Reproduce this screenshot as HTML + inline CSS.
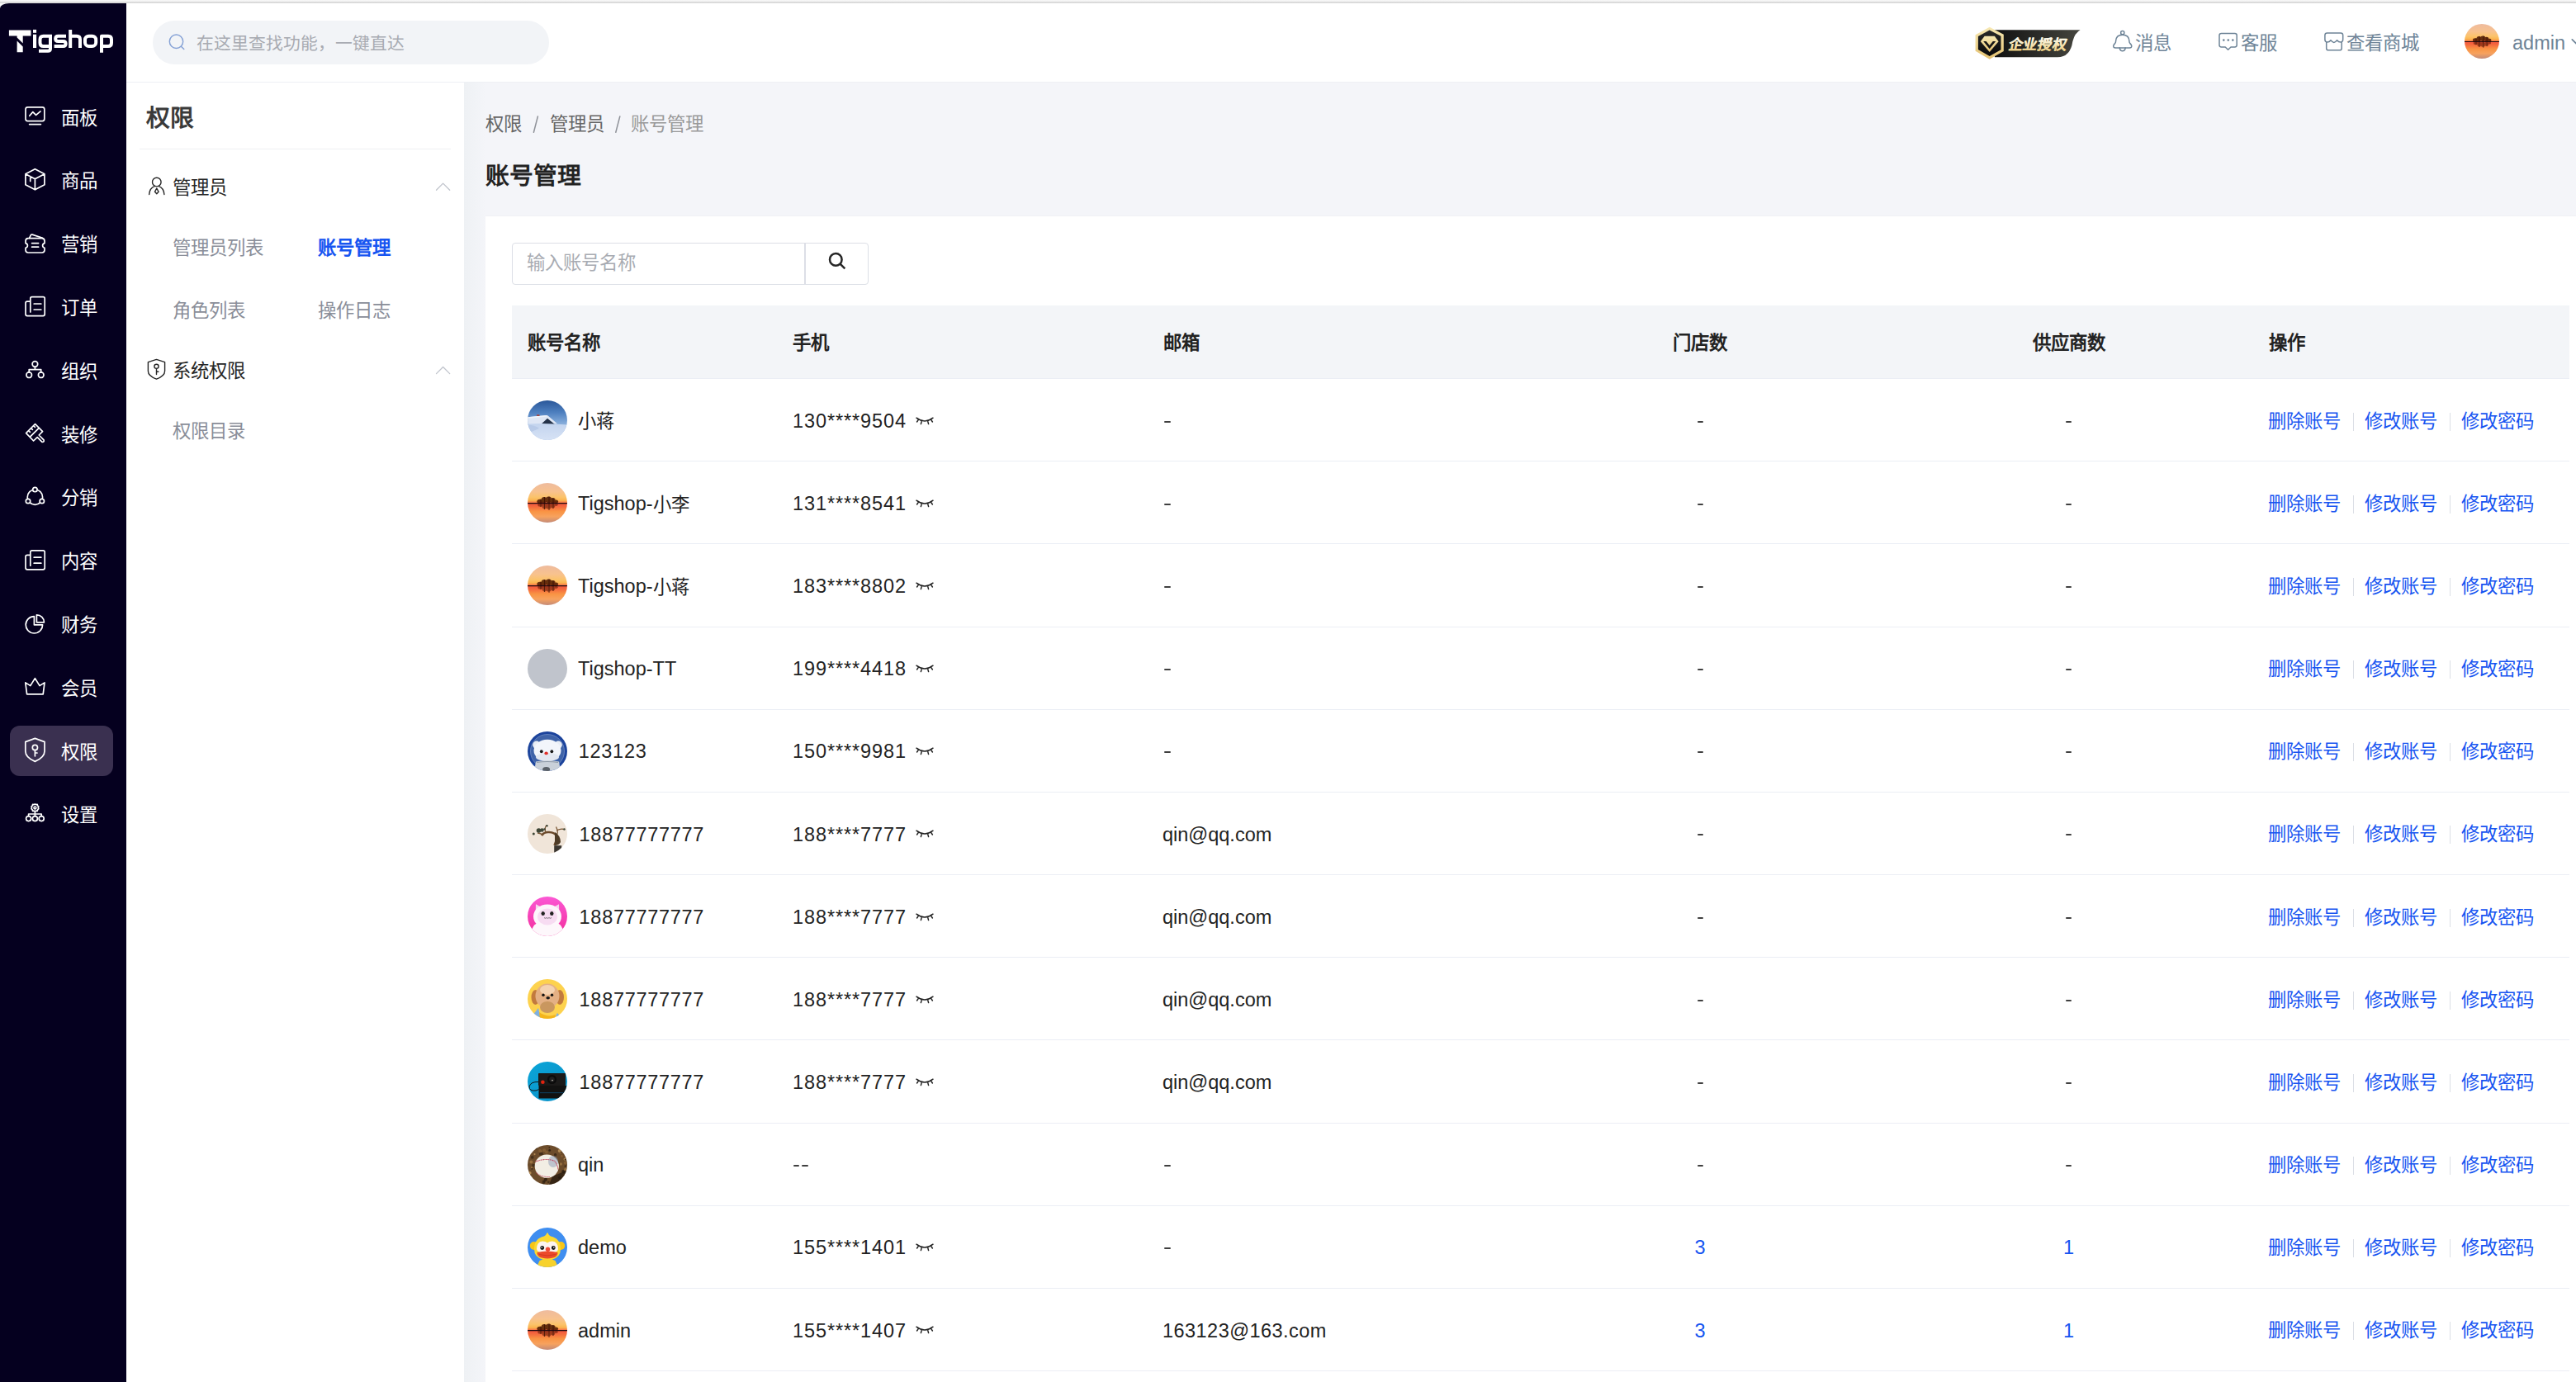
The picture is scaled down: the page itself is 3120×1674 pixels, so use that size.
<!DOCTYPE html>
<html lang="zh-CN">
<head>
<meta charset="utf-8">
<style>
*{box-sizing:border-box;margin:0;padding:0}
html,body{width:3120px;height:1674px;overflow:hidden;background:#fff}
body{position:relative;font-family:"Liberation Sans",sans-serif;font-size:22.4px;line-height:30px;color:#222}
.abs{position:absolute}
.t{position:absolute;white-space:nowrap;line-height:30px;font-size:22.4px}
#winbar{left:0;top:0;width:3120px;height:4px;background:linear-gradient(#f6f6f6 0,#f4f4f4 1.8px,#d8d8d8 2.2px,#dcdcdc 3.6px,#e8e8e8 4px)}
#corner{left:0;top:3.6px;width:16px;height:10px;background:#f6f6f6}
#side{left:0;top:4px;width:153px;height:1670px;background:#05001f;border-top-left-radius:11px 6px}
#header{left:153px;top:4px;width:2967px;height:96px;background:#fff;border-bottom:1px solid #eef0f4}
#panel{left:153px;top:100px;width:409px;height:1574px;background:#fff}
#content{left:562px;top:100px;width:2558px;height:1574px;background:#f4f5f9}
#shade{left:562px;top:100px;width:26px;height:1574px;background:linear-gradient(90deg,#eef1f4,rgba(244,245,249,0))}
#card{left:588px;top:262px;width:2600px;height:1430px;background:#fff;box-shadow:0 -1px 1px rgba(0,0,0,0.015)}
#active{left:12px;top:879px;width:125px;height:61px;border-radius:12px;background:#3a3050}
.mtxt{color:#fff}
#hsearch{left:185px;top:25px;width:480px;height:53px;border-radius:27px;background:#f2f4f7}
.hph{color:#a8abb2}
.hnav{color:#6e8497}
.ptitle{font-size:28.8px;line-height:40px;font-weight:bold;color:#3a3a3a}
.grp{color:#262626}
.sub{color:#8a8e99}
.sub.on{color:#1755f1;font-weight:600}
.bc{color:#666}
.bc2{color:#999}
.sep{color:#b6b9c0}
.title{font-size:28.8px;line-height:40px;font-weight:bold;color:#222}
#sinput{left:619.6px;top:294.1px;width:432px;height:50.5px;border:1.5px solid #dcdfe6;border-radius:4px;background:#fff}
#sdiv{left:974.4px;top:295px;width:1.5px;height:49px;background:#dcdfe6}
#thead{left:620px;top:370px;width:2492px;height:89px;background:#f3f5f8;border-bottom:1px solid #ebeef5}
.th{font-weight:600;color:#222}
.rowline{left:620px;width:2492px;height:1px;background:#ebeef5}
.cell{color:#222}
.ctr{transform:translateX(-50%)}
.link{color:#1755f1}
.acts{color:#1755f1;display:flex;align-items:center}
.lat{font-size:23.5px;position:relative;top:-0.8px}
.badge{font-size:18.6px;line-height:24px;font-weight:900;font-style:normal;transform:skewX(-11deg);transform-origin:0 100%;background:linear-gradient(#fffdf6,#f3dfa6 55%,#e8c67a);-webkit-background-clip:text;background-clip:text;color:transparent}
.vsep{width:1.5px;height:22px;background:#dcdfe6}
.dash{width:7.4px;height:2px;background:#404040;border-radius:1px}
</style>
</head>
<body>
<div id="winbar" class="abs"></div>
<div id="corner" class="abs"></div>
<div id="side" class="abs"></div>
<div id="active" class="abs"></div>
<svg class="abs" style="left:0;top:0" width="153" height="90" viewBox="0 0 153 90"><g fill="#fff"><path d="M10.9 36.6 H37.5 V43.6 H27.7 V52.6 L20.6 45.6 V43.6 H10.9 Z"/><path d="M20.6 49.6 L27.7 56.4 V63.3 H20.6 Z"/><rect x="40" y="35.9" width="4.1" height="3.9"/><rect x="40" y="41.7" width="4.1" height="16.3"/></g><g fill="none" stroke="#fff" stroke-width="4" stroke-linejoin="round"><path d="M61 43.7 H52.5 Q48.5 43.7 48.5 47.7 V52 Q48.5 56 52.5 56 H61 M61 41.7 V59 Q61 61.7 58 61.7 H47"/><path d="M80 43.7 H70.5 Q67.2 43.7 67.2 46.9 Q67.2 49.9 70.5 49.9 H76.5 Q79.6 49.9 79.6 53 Q79.6 56 76.5 56 H65.6"/><path d="M85.2 35.9 V58 M85.2 43.7 H93 Q97 43.7 97 47.7 V58"/><rect x="103" y="43.7" width="13.2" height="12.3" rx="4.5"/><path d="M123 63.7 V43.7 H131 Q135 43.7 135 47.7 V52 Q135 56 131 56 H123"/></g></svg>
<svg class="abs" style="left:0;top:0" width="153" height="1674" viewBox="0 0 153 1674"><g fill="none" stroke="#fff" stroke-width="1.7" stroke-linecap="round" stroke-linejoin="round"><rect x="31" y="129.8" width="22.8" height="16.8" rx="2.5"/><path d="M35.6 150.6 H49.4"/><path d="M35.8 140.3 L39.8 135.6 L43.6 139.4 L49 134.8"/><path d="M42.4 204.8 L53.9 210.8 V223.8 L42.4 229.8 L30.9 223.8 V210.8 Z M30.9 210.8 L42.4 216.8 L53.9 210.8 M42.4 216.8 V229.8 M36.7 213.8 V219.5"/><path d="M31 292 Q31 288.6 34.2 288.6 H50.8 Q54 288.6 54 292 V294.6 Q51.6 295.2 51.6 297.4 Q51.6 299.6 54 300.2 V302.8 Q54 306 50.8 306 H34.2 Q31 306 31 302.8 V300.2 Q33.4 299.6 33.4 297.4 Q33.4 295.2 31 294.6 Z"/><path d="M35.6 288.4 L37.4 284.6 Q38 283.8 39 284.1 L51.6 288.3 M38.6 294.6 H46.6 M38.6 299.2 H46.6"/><g transform="translate(0,0)"><path d="M36.8 365.2 V361.6 Q36.8 359.6 38.8 359.6 H52.2 Q54.2 359.6 54.2 361.6 V380.6 Q54.2 382.6 52.2 382.6 H33 Q31 382.6 31 380.6 V367.2 Q31 365.2 33 365.2 H36.8 V378"/><path d="M41.2 368 H49.8 M41.2 375 H49.8"/></g><circle cx="42.4" cy="441" r="3.3"/><circle cx="35.2" cy="454.2" r="3.3"/><circle cx="49.7" cy="454.2" r="3.3"/><path d="M42.4 444.3 V447.6 M35.2 450.9 V447.6 H49.7 V450.9"/><path d="M31.6 524.6 L42.6 513.6 L51.6 522.6 L47.2 527 L53 532.8 Q54 535.6 51 535.4 L45.2 529.6 L40.6 534 Z M36.4 529.2 L47 518.6 M34.6 521.6 L36.4 523.4 M37.6 518.6 L39.4 520.4 M40.6 515.6 L42.4 517.4"/><circle cx="42.4" cy="602.2" r="9.2"/><circle cx="42.4" cy="593" r="2.7" fill="#05001f"/><circle cx="34" cy="607" r="2.7" fill="#05001f"/><circle cx="50.8" cy="607" r="2.7" fill="#05001f"/><g transform="translate(0,307.2)"><path d="M36.8 365.2 V361.6 Q36.8 359.6 38.8 359.6 H52.2 Q54.2 359.6 54.2 361.6 V380.6 Q54.2 382.6 52.2 382.6 H33 Q31 382.6 31 380.6 V367.2 Q31 365.2 33 365.2 H36.8 V378"/><path d="M41.2 368 H49.8 M41.2 375 H49.8"/></g><path d="M41.4 746.6 A10.2 10.2 0 1 0 51.6 756.8 H41.4 Z M44.4 744.8 V753.8 H53.4 A9 9 0 0 0 44.4 744.8 Z"/><path d="M32.6 840.8 L30.8 826.9 L36.8 830.6 L42.4 821.6 L48 830.6 L54 826.9 L52.2 840.8 Z"/><path d="M42.4 894.4 L54 898.6 V910 Q54 917.4 42.4 922.4 Q30.8 917.4 30.8 910 V898.6 Z"/><circle cx="42.4" cy="905.4" r="3.1"/><path d="M42.4 908.5 V915.8 M42.4 912 H45"/><circle cx="42.4" cy="978.4" r="1.4"/><path d="M42.4 974 L43.6 974.6 L45.2 974.4 L45.6 976 L46.8 977.2 L46.2 978.4 L46.8 979.6 L45.6 980.8 L45.2 982.4 L43.6 982.2 L42.4 982.8 L41.2 982.2 L39.6 982.4 L39.2 980.8 L38 979.6 L38.6 978.4 L38 977.2 L39.2 976 L39.6 974.4 L41.2 974.6 Z"/><circle cx="34.6" cy="991.6" r="3"/><circle cx="42.4" cy="991.6" r="3"/><circle cx="50.2" cy="991.6" r="3"/><path d="M42.4 982.8 V988.6 M34.6 988.6 V986 H50.2 V988.6"/></g></svg>
<div class="t mtxt" style="left:73.5px;top:128.50px">面板</div>
<div class="t mtxt" style="left:73.5px;top:205.30px">商品</div>
<div class="t mtxt" style="left:73.5px;top:282.10px">营销</div>
<div class="t mtxt" style="left:73.5px;top:358.90px">订单</div>
<div class="t mtxt" style="left:73.5px;top:435.70px">组织</div>
<div class="t mtxt" style="left:73.5px;top:512.50px">装修</div>
<div class="t mtxt" style="left:73.5px;top:589.30px">分销</div>
<div class="t mtxt" style="left:73.5px;top:666.10px">内容</div>
<div class="t mtxt" style="left:73.5px;top:742.90px">财务</div>
<div class="t mtxt" style="left:73.5px;top:819.70px">会员</div>
<div class="t mtxt" style="left:73.5px;top:896.50px">权限</div>
<div class="t mtxt" style="left:73.5px;top:973.30px">设置</div>

<div id="header" class="abs"></div>
<div id="hsearch" class="abs"></div>
<svg class="abs" style="left:200px;top:37px" width="30" height="30" viewBox="200 37 30 30"><g fill="none" stroke="#86a2d6" stroke-width="1.45" stroke-linecap="round"><circle cx="213.5" cy="50.2" r="8.2"/><path d="M219.6 56.4 L222.8 59.6"/></g></svg>
<div class="t hph" style="left:238px;top:37.8px;font-size:20.8px">在这里查找功能，一键直达</div>

<svg class="abs" style="left:2388px;top:30px" width="136" height="44" viewBox="2388 30 136 44">
<defs>
<linearGradient id="bgold" x1="0" y1="0" x2="0" y2="1"><stop offset="0" stop-color="#f7e9b4"/><stop offset="1" stop-color="#e4c170"/></linearGradient>
<linearGradient id="bdark" x1="0" y1="0" x2="1" y2="0"><stop offset="0" stop-color="#111"/><stop offset="1" stop-color="#46463f"/></linearGradient>
<linearGradient id="hdark" x1="0" y1="0" x2="0" y2="1"><stop offset="0" stop-color="#2a2a2a"/><stop offset="1" stop-color="#080808"/></linearGradient>
</defs>
<path d="M2416 36.3 H2519.6 Q2513 40 2510.4 50 Q2507.6 69.3 2492 69.3 H2416 Z" fill="url(#bdark)"/>
<polygon points="2409.7,32.8 2426.8,41.8 2426.8,61.9 2409.7,71.7 2392.6,61.7 2392.6,42.2" fill="url(#bgold)"/>
<polygon points="2409.7,36.6 2423.5,43.8 2423.5,60.2 2409.7,68.1 2395.9,60.1 2395.9,43.9" fill="url(#hdark)"/>
<path d="M2403.6 43.8 H2415.8 L2420.6 50.2 L2409.7 63 L2398.8 50.2 Z" fill="url(#bgold)"/>
<path d="M2402.2 49.9 H2405.6 L2409.7 55 L2413.8 49.9 H2417.2 L2409.7 59.2 Z" fill="#161616"/>
</svg>
<svg class="abs" style="left:2425px;top:38px" width="95" height="28" viewBox="2425 38 95 28">
<defs><linearGradient id="tg" x1="0" y1="0" x2="0" y2="1"><stop offset="0" stop-color="#ffffff"/><stop offset="0.5" stop-color="#f6e6b8"/><stop offset="1" stop-color="#e9c77a"/></linearGradient></defs>
<g transform="translate(2431.5 59.6) skewX(-12)"><text x="0" y="0" font-family="Liberation Sans, sans-serif" font-size="17" font-weight="bold" fill="url(#tg)" stroke="url(#tg)" stroke-width="0.3" letter-spacing="1.1">企业授权</text></g>
</svg>

<svg class="abs" style="left:2550px;top:32px" width="600" height="40" viewBox="2550 32 600 40">
<g fill="none" stroke="#6e8497" stroke-width="1.5" stroke-linejoin="round" stroke-linecap="round">
<circle cx="2570.75" cy="39.7" r="2.1"/>
<path d="M2562.2 57.9 H2579.3 Q2582 57.9 2581.8 55.6 Q2581.5 54 2579.7 52.4 Q2578.9 51.4 2578.9 49.8 Q2578.7 42.2 2570.75 42.2 Q2562.8 42.2 2562.6 49.8 Q2562.6 51.4 2561.8 52.4 Q2560 54 2559.7 55.6 Q2559.5 57.9 2562.2 57.9 Z"/>
<path d="M2567.3 58.1 Q2567.8 61.8 2570.75 61.8 Q2573.7 61.8 2574.2 58.1"/>
<path d="M2690.4 40.4 H2706.8 Q2709.2 40.4 2709.2 42.8 V54.6 Q2709.2 57 2706.8 57 H2702 L2698.6 60.3 L2695.2 57 H2690.4 Q2688 57 2688 54.6 V42.8 Q2688 40.4 2690.4 40.4 Z"/>
<path d="M2818.6 39.9 H2835 Q2837.7 39.9 2837.7 42.6 V47.8 Q2837.7 50.8 2835.4 51 Q2832.4 51.3 2830.6 48.7 Q2828.7 51.5 2826.8 51.5 Q2824.9 51.5 2823 48.7 Q2821.2 51.3 2818.2 51 Q2815.9 50.8 2815.9 47.8 V42.6 Q2815.9 39.9 2818.6 39.9 Z"/>
<path d="M2817.7 51.2 V58.4 Q2817.7 60.8 2820.1 60.8 H2833.8 Q2836.2 60.8 2836.2 58.4 V51.2"/>
<path d="M3115.3 47.8 L3121 53.5 L3126.7 47.8" stroke-width="1.7"/>
</g>
<g fill="#6e8497"><circle cx="2693.3" cy="48.6" r="1.3"/><circle cx="2698.8" cy="48.6" r="1.3"/><circle cx="2704.3" cy="48.6" r="1.3"/></g>
</svg>
<div class="t hnav" style="left:2586px;top:37.7px">消息</div>
<div class="t hnav" style="left:2714px;top:37.8px">客服</div>
<div class="t hnav" style="left:2841.5px;top:38px">查看商城</div>
<svg class="abs" style="left:2985px;top:29px" width="42" height="42" viewBox="0 0 48 48"><defs><clipPath id="chdr"><circle cx="24" cy="24" r="24"/></clipPath><filter id="fhdr" x="-20%" y="-20%" width="140%" height="140%"><feGaussianBlur stdDeviation="0.7"/></filter><linearGradient id="ghdr" x1="0" y1="0" x2="0" y2="1"><stop offset="0" stop-color="#eebb9e"/><stop offset="0.22" stop-color="#f8c28e"/><stop offset="0.36" stop-color="#fbc36a"/><stop offset="0.44" stop-color="#fbb44e"/><stop offset="0.49" stop-color="#f77c48"/><stop offset="0.515" stop-color="#2a1018"/><stop offset="0.535" stop-color="#f25a3e"/><stop offset="0.6" stop-color="#f56a3e"/><stop offset="0.72" stop-color="#f99444"/><stop offset="0.85" stop-color="#f7a25e"/><stop offset="1" stop-color="#c48b78"/></linearGradient></defs><g clip-path="url(#chdr)"><rect width="48" height="48" fill="url(#ghdr)"/><g filter="url(#fhdr)"><g fill="#4a1408" opacity="0.85"><ellipse cx="15" cy="22.3" rx="3.6" ry="2.6"/><ellipse cx="20" cy="20.6" rx="3.4" ry="3.6"/><ellipse cx="25.5" cy="20.4" rx="3.8" ry="3.8"/><ellipse cx="30.5" cy="21.2" rx="3.2" ry="3.2"/><ellipse cx="34.5" cy="22.6" rx="2.6" ry="2.2"/></g><g fill="#5a1a0c" opacity="0.55"><ellipse cx="15.5" cy="26.5" rx="3.2" ry="2.2"/><ellipse cx="20.5" cy="28" rx="3" ry="3.4"/><ellipse cx="25.5" cy="28.2" rx="3.2" ry="3.6"/><ellipse cx="30.5" cy="27.6" rx="2.8" ry="3"/><ellipse cx="34.5" cy="26.2" rx="2.2" ry="1.8"/></g><path d="M20.5 17 V32 M26 16.5 V33 M31 18.5 V31 M16 19.5 V29" stroke="#2a0a06" stroke-width="0.9" opacity="0.7"/></g><rect x="0" y="24.2" width="48" height="0.9" fill="#1c0810"/></g></svg>
<div class="t hnav" style="left:3043px;top:38.2px"><span class="lat">admin</span></div>

<div id="panel" class="abs"></div>
<svg class="abs" style="left:170px;top:205px" width="380" height="260" viewBox="170 205 380 260">
<g fill="none" stroke="#262626" stroke-width="1.4" stroke-linejoin="round" stroke-linecap="round">
<circle cx="189.8" cy="220.6" r="5.3"/>
<path d="M180.7 235.5 Q181.4 227.6 187.2 225.7 M198.9 235.5 Q198.2 227.6 192.4 225.7"/>
<path d="M189.8 228 L187.5 232.3 L189.8 234.7 L192.1 232.3 Z"/>
<path d="M189.5 435.4 L199.6 438.7 V449.6 Q199.6 455.6 189.5 459.2 Q179.4 455.6 179.4 449.6 V438.7 Z"/>
<circle cx="189.5" cy="443.8" r="2.6"/>
<path d="M189.5 446.4 V453.6 M189.5 450.2 H191.9"/>
</g>
<g fill="none" stroke="#c0c4cc" stroke-width="1.3" stroke-linecap="round" stroke-linejoin="round">
<path d="M528.5 230.2 L536.6 222.1 L544.7 230.2"/>
<path d="M528.5 452.6 L536.6 444.5 L544.7 452.6"/>
</g>
</svg>
<div class="t ptitle" style="left:177px;top:122.5px">权限</div>
<div class="abs" style="left:169px;top:180px;width:377px;height:1px;background:#eef0f3"></div>
<div class="t grp" style="left:209px;top:213px">管理员</div>
<div class="t sub" style="left:209px;top:286px">管理员列表</div>
<div class="t sub on" style="left:384.5px;top:286px">账号管理</div>
<div class="t sub" style="left:209px;top:362px">角色列表</div>
<div class="t sub" style="left:384.5px;top:362px">操作日志</div>
<div class="t grp" style="left:209px;top:434.7px">系统权限</div>
<div class="t sub" style="left:209px;top:508.4px">权限目录</div>

<div id="content" class="abs"></div>
<div id="shade" class="abs"></div>
<div class="t bc" style="left:588px;top:136px">权限</div>
<svg class="abs" style="left:640px;top:136px" width="120" height="30" viewBox="640 136 120 30"><g stroke="#8f9299" stroke-width="1.5" stroke-linecap="round"><path d="M651.4 141 L646.4 160.2"/><path d="M750.8 141 L745.8 160.2"/></g></svg>
<div class="t bc" style="left:665.5px;top:136px">管理员</div>

<div class="t bc2" style="left:764px;top:136px">账号管理</div>
<div class="t title" style="left:588px;top:193px">账号管理</div>
<div id="card" class="abs"></div>
<div id="sinput" class="abs"></div>
<div id="sdiv" class="abs"></div>
<div class="t hph" style="left:637.5px;top:304px">输入账号名称</div>
<svg class="abs" style="left:995px;top:298px" width="40" height="40" viewBox="995 298 40 40"><g fill="none" stroke="#262626" stroke-width="2.5" stroke-linecap="butt"><circle cx="1012.3" cy="314.4" r="7.3"/><path d="M1017.6 319.7 L1023.3 325.4"/></g></svg>

<div id="thead" class="abs"></div>
<div class="t th" style="left:639px;top:401px">账号名称</div>
<div class="t th" style="left:959.5px;top:401px">手机</div>
<div class="t th" style="left:1408.5px;top:401px">邮箱</div>
<div class="t th ctr" style="left:2058.7px;top:401px">门店数</div>
<div class="t th ctr" style="left:2505.7px;top:401px">供应商数</div>
<div class="t th" style="left:2747.5px;top:401px">操作</div>
<div class="abs rowline" style="top:558.17px"></div>
<svg class="abs" style="left:639px;top:485.0px" width="48" height="48" viewBox="0 0 48 48"><defs><clipPath id="c0"><circle cx="24" cy="24" r="24"/></clipPath><filter id="f0" x="-20%" y="-20%" width="140%" height="140%"><feGaussianBlur stdDeviation="0.7"/></filter><linearGradient id="g0" x1="0" y1="0" x2="0" y2="1"><stop offset="0" stop-color="#2a5799"/><stop offset="0.3" stop-color="#4d7fbf"/><stop offset="0.6" stop-color="#89afdc"/><stop offset="1" stop-color="#a7c3e8"/></linearGradient><linearGradient id="h0" x1="0" y1="0" x2="0" y2="1"><stop offset="0" stop-color="#c3d4ee"/><stop offset="1" stop-color="#d6e2f5"/></linearGradient></defs><g clip-path="url(#c0)"><rect width="48" height="48" fill="url(#g0)"/><path d="M-1 20.4 L22.8 18.1 Q24.2 18 25.2 19 L36 28.2 L-1 30.2 Z" fill="#dfe7f5"/><path d="M-1 20.4 L22.8 18.1 L24 19.6 L0 22 Z" fill="#eef3fb"/><path d="M16.4 28.8 L24 21.8 L33.6 29.4 Z" fill="#243249"/><path d="M-1 28.6 Q20 26.8 48 29.5 V48 H-1 Z" fill="url(#h0)"/><path d="M0 29.5 Q10 30 14 34 L0 40 Z" fill="#aec2e2" opacity="0.6"/><rect x="11" y="17.2" width="3.6" height="1.7" rx="0.6" fill="#a5453f"/></g></svg>
<div class="t cell" style="left:700px;top:495.50px">小蒋</div>
<div class="t cell num" style="left:960px;top:495.50px"><span class="lat" style="letter-spacing:0.9px">130****9504</span></div>
<svg class="abs" style="left:1109px;top:504.5px" width="22" height="11" viewBox="0 0 22 11"><path d="M1 1.2 Q11 9 21 1.2" stroke="#222" stroke-width="1.5" fill="none" stroke-linecap="round"/><path d="M3.2 3.6 L1.6 6 M7.2 5.6 L6.4 8.6 M14.8 5.6 L15.6 8.6 M18.8 3.6 L20.4 6" stroke="#222" stroke-width="1.5" stroke-linecap="round"/></svg>
<div class="abs dash" style="left:1410.4px;top:510px"></div>
<div class="abs dash" style="left:2055.6px;top:510px"></div>
<div class="abs dash" style="left:2501.8px;top:510px"></div>
<div class="t cell link" style="left:2747px;top:495.50px">删除账号</div>
<div class="t cell link" style="left:2863.8px;top:495.50px">修改账号</div>
<div class="t cell link" style="left:2980.6px;top:495.50px">修改密码</div>
<div class="abs vsep" style="left:2849.6px;top:499.50px"></div>
<div class="abs vsep" style="left:2966.9px;top:499.50px"></div>
<div class="abs rowline" style="top:658.34px"></div>
<svg class="abs" style="left:639px;top:585.17px" width="48" height="48" viewBox="0 0 48 48"><defs><clipPath id="c1"><circle cx="24" cy="24" r="24"/></clipPath><filter id="f1" x="-20%" y="-20%" width="140%" height="140%"><feGaussianBlur stdDeviation="0.7"/></filter><linearGradient id="g1" x1="0" y1="0" x2="0" y2="1"><stop offset="0" stop-color="#eebb9e"/><stop offset="0.22" stop-color="#f8c28e"/><stop offset="0.36" stop-color="#fbc36a"/><stop offset="0.44" stop-color="#fbb44e"/><stop offset="0.49" stop-color="#f77c48"/><stop offset="0.515" stop-color="#2a1018"/><stop offset="0.535" stop-color="#f25a3e"/><stop offset="0.6" stop-color="#f56a3e"/><stop offset="0.72" stop-color="#f99444"/><stop offset="0.85" stop-color="#f7a25e"/><stop offset="1" stop-color="#c48b78"/></linearGradient></defs><g clip-path="url(#c1)"><rect width="48" height="48" fill="url(#g1)"/><g filter="url(#f1)"><g fill="#4a1408" opacity="0.85"><ellipse cx="15" cy="22.3" rx="3.6" ry="2.6"/><ellipse cx="20" cy="20.6" rx="3.4" ry="3.6"/><ellipse cx="25.5" cy="20.4" rx="3.8" ry="3.8"/><ellipse cx="30.5" cy="21.2" rx="3.2" ry="3.2"/><ellipse cx="34.5" cy="22.6" rx="2.6" ry="2.2"/></g><g fill="#5a1a0c" opacity="0.55"><ellipse cx="15.5" cy="26.5" rx="3.2" ry="2.2"/><ellipse cx="20.5" cy="28" rx="3" ry="3.4"/><ellipse cx="25.5" cy="28.2" rx="3.2" ry="3.6"/><ellipse cx="30.5" cy="27.6" rx="2.8" ry="3"/><ellipse cx="34.5" cy="26.2" rx="2.2" ry="1.8"/></g><path d="M20.5 17 V32 M26 16.5 V33 M31 18.5 V31 M16 19.5 V29" stroke="#2a0a06" stroke-width="0.9" opacity="0.7"/></g><rect x="0" y="24.2" width="48" height="0.9" fill="#1c0810"/></g></svg>
<div class="t cell" style="left:700px;top:595.67px"><span class="lat" style="letter-spacing:0px;">Tigshop-</span>小李</div>
<div class="t cell num" style="left:960px;top:595.67px"><span class="lat" style="letter-spacing:0.9px">131****8541</span></div>
<svg class="abs" style="left:1109px;top:604.67px" width="22" height="11" viewBox="0 0 22 11"><path d="M1 1.2 Q11 9 21 1.2" stroke="#222" stroke-width="1.5" fill="none" stroke-linecap="round"/><path d="M3.2 3.6 L1.6 6 M7.2 5.6 L6.4 8.6 M14.8 5.6 L15.6 8.6 M18.8 3.6 L20.4 6" stroke="#222" stroke-width="1.5" stroke-linecap="round"/></svg>
<div class="abs dash" style="left:1410.4px;top:610px"></div>
<div class="abs dash" style="left:2055.6px;top:610px"></div>
<div class="abs dash" style="left:2501.8px;top:610px"></div>
<div class="t cell link" style="left:2747px;top:595.67px">删除账号</div>
<div class="t cell link" style="left:2863.8px;top:595.67px">修改账号</div>
<div class="t cell link" style="left:2980.6px;top:595.67px">修改密码</div>
<div class="abs vsep" style="left:2849.6px;top:599.67px"></div>
<div class="abs vsep" style="left:2966.9px;top:599.67px"></div>
<div class="abs rowline" style="top:758.51px"></div>
<svg class="abs" style="left:639px;top:685.34px" width="48" height="48" viewBox="0 0 48 48"><defs><clipPath id="c2"><circle cx="24" cy="24" r="24"/></clipPath><filter id="f2" x="-20%" y="-20%" width="140%" height="140%"><feGaussianBlur stdDeviation="0.7"/></filter><linearGradient id="g2" x1="0" y1="0" x2="0" y2="1"><stop offset="0" stop-color="#eebb9e"/><stop offset="0.22" stop-color="#f8c28e"/><stop offset="0.36" stop-color="#fbc36a"/><stop offset="0.44" stop-color="#fbb44e"/><stop offset="0.49" stop-color="#f77c48"/><stop offset="0.515" stop-color="#2a1018"/><stop offset="0.535" stop-color="#f25a3e"/><stop offset="0.6" stop-color="#f56a3e"/><stop offset="0.72" stop-color="#f99444"/><stop offset="0.85" stop-color="#f7a25e"/><stop offset="1" stop-color="#c48b78"/></linearGradient></defs><g clip-path="url(#c2)"><rect width="48" height="48" fill="url(#g2)"/><g filter="url(#f2)"><g fill="#4a1408" opacity="0.85"><ellipse cx="15" cy="22.3" rx="3.6" ry="2.6"/><ellipse cx="20" cy="20.6" rx="3.4" ry="3.6"/><ellipse cx="25.5" cy="20.4" rx="3.8" ry="3.8"/><ellipse cx="30.5" cy="21.2" rx="3.2" ry="3.2"/><ellipse cx="34.5" cy="22.6" rx="2.6" ry="2.2"/></g><g fill="#5a1a0c" opacity="0.55"><ellipse cx="15.5" cy="26.5" rx="3.2" ry="2.2"/><ellipse cx="20.5" cy="28" rx="3" ry="3.4"/><ellipse cx="25.5" cy="28.2" rx="3.2" ry="3.6"/><ellipse cx="30.5" cy="27.6" rx="2.8" ry="3"/><ellipse cx="34.5" cy="26.2" rx="2.2" ry="1.8"/></g><path d="M20.5 17 V32 M26 16.5 V33 M31 18.5 V31 M16 19.5 V29" stroke="#2a0a06" stroke-width="0.9" opacity="0.7"/></g><rect x="0" y="24.2" width="48" height="0.9" fill="#1c0810"/></g></svg>
<div class="t cell" style="left:700px;top:695.84px"><span class="lat" style="letter-spacing:0px;">Tigshop-</span>小蒋</div>
<div class="t cell num" style="left:960px;top:695.84px"><span class="lat" style="letter-spacing:0.9px">183****8802</span></div>
<svg class="abs" style="left:1109px;top:704.84px" width="22" height="11" viewBox="0 0 22 11"><path d="M1 1.2 Q11 9 21 1.2" stroke="#222" stroke-width="1.5" fill="none" stroke-linecap="round"/><path d="M3.2 3.6 L1.6 6 M7.2 5.6 L6.4 8.6 M14.8 5.6 L15.6 8.6 M18.8 3.6 L20.4 6" stroke="#222" stroke-width="1.5" stroke-linecap="round"/></svg>
<div class="abs dash" style="left:1410.4px;top:710px"></div>
<div class="abs dash" style="left:2055.6px;top:710px"></div>
<div class="abs dash" style="left:2501.8px;top:710px"></div>
<div class="t cell link" style="left:2747px;top:695.84px">删除账号</div>
<div class="t cell link" style="left:2863.8px;top:695.84px">修改账号</div>
<div class="t cell link" style="left:2980.6px;top:695.84px">修改密码</div>
<div class="abs vsep" style="left:2849.6px;top:699.84px"></div>
<div class="abs vsep" style="left:2966.9px;top:699.84px"></div>
<div class="abs rowline" style="top:858.68px"></div>
<svg class="abs" style="left:639px;top:785.51px" width="48" height="48" viewBox="0 0 48 48"><defs><clipPath id="c3"><circle cx="24" cy="24" r="24"/></clipPath><filter id="f3" x="-20%" y="-20%" width="140%" height="140%"><feGaussianBlur stdDeviation="0.7"/></filter></defs><g clip-path="url(#c3)"><rect width="48" height="48" fill="#c0c4cc"/></g></svg>
<div class="t cell" style="left:700px;top:796.01px"><span class="lat" style="letter-spacing:0px;">Tigshop-TT</span></div>
<div class="t cell num" style="left:960px;top:796.01px"><span class="lat" style="letter-spacing:0.9px">199****4418</span></div>
<svg class="abs" style="left:1109px;top:805.01px" width="22" height="11" viewBox="0 0 22 11"><path d="M1 1.2 Q11 9 21 1.2" stroke="#222" stroke-width="1.5" fill="none" stroke-linecap="round"/><path d="M3.2 3.6 L1.6 6 M7.2 5.6 L6.4 8.6 M14.8 5.6 L15.6 8.6 M18.8 3.6 L20.4 6" stroke="#222" stroke-width="1.5" stroke-linecap="round"/></svg>
<div class="abs dash" style="left:1410.4px;top:810px"></div>
<div class="abs dash" style="left:2055.6px;top:810px"></div>
<div class="abs dash" style="left:2501.8px;top:810px"></div>
<div class="t cell link" style="left:2747px;top:796.01px">删除账号</div>
<div class="t cell link" style="left:2863.8px;top:796.01px">修改账号</div>
<div class="t cell link" style="left:2980.6px;top:796.01px">修改密码</div>
<div class="abs vsep" style="left:2849.6px;top:800.01px"></div>
<div class="abs vsep" style="left:2966.9px;top:800.01px"></div>
<div class="abs rowline" style="top:958.85px"></div>
<svg class="abs" style="left:639px;top:885.68px" width="48" height="48" viewBox="0 0 48 48"><defs><clipPath id="c4"><circle cx="24" cy="24" r="24"/></clipPath><filter id="f4" x="-20%" y="-20%" width="140%" height="140%"><feGaussianBlur stdDeviation="0.7"/></filter></defs><g clip-path="url(#c4)"><rect width="48" height="48" fill="#1c449c"/><circle cx="24" cy="24" r="20.5" fill="#3f63a8"/><circle cx="24" cy="24" r="20.5" fill="none" stroke="#8ea6d3" stroke-width="0.8" opacity="0.7"/><circle cx="10.8" cy="16.2" r="4.6" fill="#e8edf5"/><circle cx="37.2" cy="16.2" r="4.6" fill="#e8edf5"/><ellipse cx="24" cy="23" rx="16.5" ry="13.2" fill="#f2f5fb"/><ellipse cx="24" cy="31" rx="14" ry="5" fill="#e3e8f1"/><ellipse cx="16.8" cy="24.3" rx="1.9" ry="2" fill="#1a1a1a"/><ellipse cx="29.3" cy="24.3" rx="1.9" ry="2" fill="#1a1a1a"/><ellipse cx="22.6" cy="26.4" rx="2.2" ry="1.9" fill="#e0302a"/><path d="M10 36.5 Q24 34 38 36.5 L40 48 H8 Z" fill="#c9d0d9"/><path d="M11 37.5 Q24 35.5 37 37.5" stroke="#8f9aa8" stroke-width="1.2" fill="none"/><ellipse cx="22.6" cy="46" rx="4.5" ry="3" fill="#5a6068"/></g></svg>
<div class="t cell" style="left:700px;top:896.18px"><span class="lat" style="letter-spacing:0.7px;margin-left:0.8px;">123123</span></div>
<div class="t cell num" style="left:960px;top:896.18px"><span class="lat" style="letter-spacing:0.9px">150****9981</span></div>
<svg class="abs" style="left:1109px;top:905.18px" width="22" height="11" viewBox="0 0 22 11"><path d="M1 1.2 Q11 9 21 1.2" stroke="#222" stroke-width="1.5" fill="none" stroke-linecap="round"/><path d="M3.2 3.6 L1.6 6 M7.2 5.6 L6.4 8.6 M14.8 5.6 L15.6 8.6 M18.8 3.6 L20.4 6" stroke="#222" stroke-width="1.5" stroke-linecap="round"/></svg>
<div class="abs dash" style="left:1410.4px;top:910px"></div>
<div class="abs dash" style="left:2055.6px;top:910px"></div>
<div class="abs dash" style="left:2501.8px;top:910px"></div>
<div class="t cell link" style="left:2747px;top:896.18px">删除账号</div>
<div class="t cell link" style="left:2863.8px;top:896.18px">修改账号</div>
<div class="t cell link" style="left:2980.6px;top:896.18px">修改密码</div>
<div class="abs vsep" style="left:2849.6px;top:900.18px"></div>
<div class="abs vsep" style="left:2966.9px;top:900.18px"></div>
<div class="abs rowline" style="top:1059.02px"></div>
<svg class="abs" style="left:639px;top:985.85px" width="48" height="48" viewBox="0 0 48 48"><defs><clipPath id="c5"><circle cx="24" cy="24" r="24"/></clipPath><filter id="f5" x="-20%" y="-20%" width="140%" height="140%"><feGaussianBlur stdDeviation="0.7"/></filter></defs><g clip-path="url(#c5)"><rect width="48" height="48" fill="#f0e5d9"/><g filter="url(#f5)"><path d="M32.5 38 Q36 30 34.5 26 Q33 22.5 26 22 Q20 21.5 17 26" stroke="#6b4a2c" stroke-width="2.6" fill="none"/><path d="M34.5 27 Q38 22 34.5 15.5 M35 20 Q40 17.5 44 18.5 M22 22 Q20 18 22.8 13.5 M19 26 Q16 23 12 23" stroke="#7a5634" stroke-width="1.3" fill="none"/><path d="M33 22 Q40 26 40 34 Q38 38 33 38 Z" fill="#4e3a26"/><circle cx="13.5" cy="20" r="2.8" fill="#3d4536"/><circle cx="17.5" cy="19.5" r="2.2" fill="#3d4536"/><circle cx="7.3" cy="24" r="1.5" fill="#3d4536"/><circle cx="20.5" cy="18.5" r="1.3" fill="#3d4536"/><circle cx="23.5" cy="14.3" r="1.2" fill="#3d4536"/><circle cx="44.5" cy="18.5" r="1.2" fill="#3d4536"/></g><rect x="32.2" y="38.2" width="9" height="10" fill="#3a3630"/></g></svg>
<div class="t cell" style="left:700px;top:996.35px"><span class="lat" style="letter-spacing:0.7px;margin-left:1.6px;">18877777777</span></div>
<div class="t cell num" style="left:960px;top:996.35px"><span class="lat" style="letter-spacing:0.9px">188****7777</span></div>
<svg class="abs" style="left:1109px;top:1005.35px" width="22" height="11" viewBox="0 0 22 11"><path d="M1 1.2 Q11 9 21 1.2" stroke="#222" stroke-width="1.5" fill="none" stroke-linecap="round"/><path d="M3.2 3.6 L1.6 6 M7.2 5.6 L6.4 8.6 M14.8 5.6 L15.6 8.6 M18.8 3.6 L20.4 6" stroke="#222" stroke-width="1.5" stroke-linecap="round"/></svg>
<div class="t cell" style="left:1408px;top:996.35px"><span class="lat" style="letter-spacing:0px;">qin@qq.com</span></div>
<div class="abs dash" style="left:2055.6px;top:1010px"></div>
<div class="abs dash" style="left:2501.8px;top:1010px"></div>
<div class="t cell link" style="left:2747px;top:996.35px">删除账号</div>
<div class="t cell link" style="left:2863.8px;top:996.35px">修改账号</div>
<div class="t cell link" style="left:2980.6px;top:996.35px">修改密码</div>
<div class="abs vsep" style="left:2849.6px;top:1000.35px"></div>
<div class="abs vsep" style="left:2966.9px;top:1000.35px"></div>
<div class="abs rowline" style="top:1159.19px"></div>
<svg class="abs" style="left:639px;top:1086.02px" width="48" height="48" viewBox="0 0 48 48"><defs><clipPath id="c6"><circle cx="24" cy="24" r="24"/></clipPath><filter id="f6" x="-20%" y="-20%" width="140%" height="140%"><feGaussianBlur stdDeviation="0.7"/></filter><linearGradient id="g6" x1="0" y1="0" x2="0" y2="1"><stop offset="0" stop-color="#fb58d4"/><stop offset="1" stop-color="#f22d9a"/></linearGradient></defs><g clip-path="url(#c6)"><rect width="48" height="48" fill="url(#g6)"/><path d="M9.6 23 L10 9.2 L19 14 Z M38.4 23 L38 9.2 L29 14 Z" fill="#f6d6ee"/><ellipse cx="24" cy="24" rx="17" ry="14.5" fill="#fdf6fb"/><ellipse cx="24" cy="41" rx="18.5" ry="12" fill="#fdf7fb"/><ellipse cx="24" cy="24.5" rx="12" ry="10" fill="#f7dcf2"/><ellipse cx="18.7" cy="20.5" rx="2.2" ry="2.6" fill="#222"/><ellipse cx="29.3" cy="20.5" rx="2.2" ry="2.6" fill="#222"/><path d="M20 25.6 Q21.5 27 23 25.6 Q24.5 27 26 25.6 Q27.5 27 29 25.6" stroke="#333" stroke-width="0.6" fill="none"/></g></svg>
<div class="t cell" style="left:700px;top:1096.52px"><span class="lat" style="letter-spacing:0.7px;margin-left:1.6px;">18877777777</span></div>
<div class="t cell num" style="left:960px;top:1096.52px"><span class="lat" style="letter-spacing:0.9px">188****7777</span></div>
<svg class="abs" style="left:1109px;top:1105.52px" width="22" height="11" viewBox="0 0 22 11"><path d="M1 1.2 Q11 9 21 1.2" stroke="#222" stroke-width="1.5" fill="none" stroke-linecap="round"/><path d="M3.2 3.6 L1.6 6 M7.2 5.6 L6.4 8.6 M14.8 5.6 L15.6 8.6 M18.8 3.6 L20.4 6" stroke="#222" stroke-width="1.5" stroke-linecap="round"/></svg>
<div class="t cell" style="left:1408px;top:1096.52px"><span class="lat" style="letter-spacing:0px;">qin@qq.com</span></div>
<div class="abs dash" style="left:2055.6px;top:1111px"></div>
<div class="abs dash" style="left:2501.8px;top:1111px"></div>
<div class="t cell link" style="left:2747px;top:1096.52px">删除账号</div>
<div class="t cell link" style="left:2863.8px;top:1096.52px">修改账号</div>
<div class="t cell link" style="left:2980.6px;top:1096.52px">修改密码</div>
<div class="abs vsep" style="left:2849.6px;top:1100.52px"></div>
<div class="abs vsep" style="left:2966.9px;top:1100.52px"></div>
<div class="abs rowline" style="top:1259.36px"></div>
<svg class="abs" style="left:639px;top:1186.19px" width="48" height="48" viewBox="0 0 48 48"><defs><clipPath id="c7"><circle cx="24" cy="24" r="24"/></clipPath><filter id="f7" x="-20%" y="-20%" width="140%" height="140%"><feGaussianBlur stdDeviation="0.7"/></filter></defs><g clip-path="url(#c7)"><rect width="48" height="48" fill="#fdd24e"/><g filter="url(#f7)"><ellipse cx="9.5" cy="22" rx="5" ry="9" fill="#c27a3e"/><ellipse cx="39" cy="22" rx="5" ry="9" fill="#c27a3e"/><ellipse cx="24" cy="20.5" rx="14.5" ry="15" fill="#e4b084"/><ellipse cx="24" cy="13" rx="9" ry="6" fill="#f4d2b0"/><ellipse cx="24" cy="34" rx="9" ry="7" fill="#c9975e"/></g><circle cx="19" cy="19.3" r="1.7" fill="#111"/><circle cx="29.5" cy="19.3" r="1.7" fill="#111"/><ellipse cx="24.7" cy="22.8" rx="2.3" ry="1.8" fill="#1a1a1a"/><path d="M6 44 L13 35 L16 48 Z" fill="#7fb0e0"/><path d="M34.5 44 L36 41 L42 48 H34 Z" fill="#7fb0e0"/><path d="M14 40 Q24 47 34 43 L33 48 H15 Z" fill="#f4b51c"/></g></svg>
<div class="t cell" style="left:700px;top:1196.69px"><span class="lat" style="letter-spacing:0.7px;margin-left:1.6px;">18877777777</span></div>
<div class="t cell num" style="left:960px;top:1196.69px"><span class="lat" style="letter-spacing:0.9px">188****7777</span></div>
<svg class="abs" style="left:1109px;top:1205.69px" width="22" height="11" viewBox="0 0 22 11"><path d="M1 1.2 Q11 9 21 1.2" stroke="#222" stroke-width="1.5" fill="none" stroke-linecap="round"/><path d="M3.2 3.6 L1.6 6 M7.2 5.6 L6.4 8.6 M14.8 5.6 L15.6 8.6 M18.8 3.6 L20.4 6" stroke="#222" stroke-width="1.5" stroke-linecap="round"/></svg>
<div class="t cell" style="left:1408px;top:1196.69px"><span class="lat" style="letter-spacing:0px;">qin@qq.com</span></div>
<div class="abs dash" style="left:2055.6px;top:1211px"></div>
<div class="abs dash" style="left:2501.8px;top:1211px"></div>
<div class="t cell link" style="left:2747px;top:1196.69px">删除账号</div>
<div class="t cell link" style="left:2863.8px;top:1196.69px">修改账号</div>
<div class="t cell link" style="left:2980.6px;top:1196.69px">修改密码</div>
<div class="abs vsep" style="left:2849.6px;top:1200.69px"></div>
<div class="abs vsep" style="left:2966.9px;top:1200.69px"></div>
<div class="abs rowline" style="top:1359.53px"></div>
<svg class="abs" style="left:639px;top:1286.36px" width="48" height="48" viewBox="0 0 48 48"><defs><clipPath id="c8"><circle cx="24" cy="24" r="24"/></clipPath><filter id="f8" x="-20%" y="-20%" width="140%" height="140%"><feGaussianBlur stdDeviation="0.7"/></filter><linearGradient id="g8" x1="0" y1="0" x2="1" y2="1"><stop offset="0" stop-color="#0aa6d9"/><stop offset="1" stop-color="#0b8fc6"/></linearGradient></defs><g clip-path="url(#c8)"><rect width="48" height="48" fill="url(#g8)"/><rect x="13" y="14" width="33" height="15" rx="0.8" fill="#1b1a19"/><rect x="13.5" y="29" width="34" height="15.5" fill="#121211"/><rect x="15" y="37" width="30" height="1.2" fill="#0d3a55"/><circle cx="29.5" cy="21.5" r="5.6" fill="#0b0b0b"/><circle cx="29.5" cy="21.5" r="3.2" fill="#202020"/><circle cx="30" cy="22.6" r="0.8" fill="#c9c3b6"/><circle cx="18.4" cy="24.8" r="2.3" fill="#e2230f"/><path d="M13 24.5 Q4 24 2 30 Q2 36 10 35 Q12 34.5 13.5 33.5" stroke="#111" stroke-width="1" fill="none"/></g></svg>
<div class="t cell" style="left:700px;top:1296.86px"><span class="lat" style="letter-spacing:0.7px;margin-left:1.6px;">18877777777</span></div>
<div class="t cell num" style="left:960px;top:1296.86px"><span class="lat" style="letter-spacing:0.9px">188****7777</span></div>
<svg class="abs" style="left:1109px;top:1305.86px" width="22" height="11" viewBox="0 0 22 11"><path d="M1 1.2 Q11 9 21 1.2" stroke="#222" stroke-width="1.5" fill="none" stroke-linecap="round"/><path d="M3.2 3.6 L1.6 6 M7.2 5.6 L6.4 8.6 M14.8 5.6 L15.6 8.6 M18.8 3.6 L20.4 6" stroke="#222" stroke-width="1.5" stroke-linecap="round"/></svg>
<div class="t cell" style="left:1408px;top:1296.86px"><span class="lat" style="letter-spacing:0px;">qin@qq.com</span></div>
<div class="abs dash" style="left:2055.6px;top:1311px"></div>
<div class="abs dash" style="left:2501.8px;top:1311px"></div>
<div class="t cell link" style="left:2747px;top:1296.86px">删除账号</div>
<div class="t cell link" style="left:2863.8px;top:1296.86px">修改账号</div>
<div class="t cell link" style="left:2980.6px;top:1296.86px">修改密码</div>
<div class="abs vsep" style="left:2849.6px;top:1300.86px"></div>
<div class="abs vsep" style="left:2966.9px;top:1300.86px"></div>
<div class="abs rowline" style="top:1459.70px"></div>
<svg class="abs" style="left:639px;top:1386.53px" width="48" height="48" viewBox="0 0 48 48"><defs><clipPath id="c9"><circle cx="24" cy="24" r="24"/></clipPath><filter id="f9" x="-20%" y="-20%" width="140%" height="140%"><feGaussianBlur stdDeviation="0.7"/></filter></defs><g clip-path="url(#c9)"><rect width="48" height="48" fill="#6c4c2b"/><g opacity="0.8"><circle cx="15.5" cy="7.2" r="1.7" fill="#a47a45"/><circle cx="39.4" cy="4.5" r="1.6" fill="#2a1c10"/><circle cx="10.3" cy="4.1" r="1.4" fill="#3d2a17"/><circle cx="4.4" cy="20.4" r="2.0" fill="#a47a45"/><circle cx="45.5" cy="30.3" r="1.6" fill="#a47a45"/><circle cx="27.7" cy="19.0" r="2.2" fill="#a47a45"/><circle cx="26.7" cy="6.4" r="1.4" fill="#2a1c10"/><circle cx="5.7" cy="14.8" r="1.9" fill="#3d2a17"/><circle cx="4.9" cy="27.4" r="1.1" fill="#a47a45"/><circle cx="26.3" cy="3.0" r="0.9" fill="#3d2a17"/><circle cx="23.8" cy="25.5" r="1.9" fill="#c49a60"/><circle cx="28.1" cy="21.8" r="1.2" fill="#3d2a17"/><circle cx="33.6" cy="11.7" r="1.6" fill="#2a1c10"/><circle cx="23.8" cy="16.5" r="1.4" fill="#2a1c10"/><circle cx="47.0" cy="5.7" r="1.4" fill="#8a6236"/><circle cx="7.3" cy="23.5" r="0.9" fill="#a47a45"/><circle cx="36.7" cy="27.5" r="2.0" fill="#8a6236"/><circle cx="16.3" cy="16.8" r="1.5" fill="#c49a60"/><circle cx="3.3" cy="4.5" r="1.2" fill="#a47a45"/><circle cx="2.9" cy="33.7" r="1.7" fill="#c49a60"/><circle cx="13.7" cy="18.5" r="1.7" fill="#a47a45"/><circle cx="45.2" cy="17.1" r="1.7" fill="#c49a60"/><circle cx="2.8" cy="36.9" r="1.0" fill="#3d2a17"/><circle cx="19.1" cy="44.0" r="1.5" fill="#3d2a17"/><circle cx="21.6" cy="26.4" r="2.0" fill="#c49a60"/><circle cx="41.5" cy="13.4" r="1.4" fill="#8a6236"/><circle cx="32.8" cy="18.3" r="1.1" fill="#a47a45"/><circle cx="8.5" cy="11.1" r="1.1" fill="#c49a60"/><circle cx="39.9" cy="8.8" r="1.2" fill="#3d2a17"/><circle cx="20.1" cy="17.7" r="1.6" fill="#3d2a17"/><circle cx="33.1" cy="24.7" r="1.7" fill="#a47a45"/><circle cx="21.9" cy="41.8" r="2.1" fill="#2a1c10"/><circle cx="18.8" cy="19.2" r="0.9" fill="#c49a60"/><circle cx="3.0" cy="3.2" r="1.1" fill="#3d2a17"/><circle cx="5.3" cy="28.8" r="0.9" fill="#2a1c10"/><circle cx="7.3" cy="4.9" r="1.3" fill="#a47a45"/><circle cx="3.4" cy="10.0" r="1.3" fill="#8a6236"/><circle cx="45.9" cy="28.9" r="1.5" fill="#a47a45"/><circle cx="40.7" cy="47.7" r="1.5" fill="#c49a60"/><circle cx="15.0" cy="6.9" r="1.8" fill="#8a6236"/><circle cx="23.0" cy="33.2" r="1.5" fill="#3d2a17"/><circle cx="45.6" cy="25.4" r="1.0" fill="#2a1c10"/><circle cx="43.9" cy="36.4" r="1.2" fill="#a47a45"/><circle cx="33.4" cy="12.5" r="1.3" fill="#3d2a17"/><circle cx="17.1" cy="10.7" r="1.6" fill="#2a1c10"/><circle cx="15.8" cy="10.7" r="1.9" fill="#3d2a17"/><circle cx="38.7" cy="39.3" r="1.8" fill="#3d2a17"/><circle cx="9.6" cy="23.7" r="1.8" fill="#a47a45"/><circle cx="37.9" cy="22.7" r="1.1" fill="#2a1c10"/><circle cx="45.9" cy="21.5" r="2.1" fill="#8a6236"/><circle cx="45.8" cy="17.5" r="1.1" fill="#3d2a17"/><circle cx="22.6" cy="16.2" r="1.5" fill="#2a1c10"/><circle cx="40.3" cy="23.0" r="1.7" fill="#a47a45"/><circle cx="40.1" cy="5.8" r="1.3" fill="#3d2a17"/><circle cx="22.9" cy="8.6" r="1.9" fill="#8a6236"/><circle cx="4.2" cy="45.4" r="1.8" fill="#c49a60"/><circle cx="19.3" cy="45.4" r="1.8" fill="#3d2a17"/><circle cx="47.7" cy="1.3" r="1.6" fill="#c49a60"/><circle cx="38.7" cy="7.0" r="2.0" fill="#c49a60"/><circle cx="31.5" cy="16.8" r="1.6" fill="#3d2a17"/><circle cx="1.0" cy="38.4" r="1.8" fill="#a47a45"/><circle cx="25.3" cy="44.8" r="1.4" fill="#3d2a17"/><circle cx="39.7" cy="10.1" r="1.2" fill="#8a6236"/><circle cx="24.1" cy="36.7" r="1.3" fill="#2a1c10"/><circle cx="20.1" cy="6.3" r="2.1" fill="#8a6236"/><circle cx="43.1" cy="31.8" r="1.9" fill="#2a1c10"/><circle cx="20.2" cy="44.1" r="1.5" fill="#2a1c10"/><circle cx="7.3" cy="24.5" r="2.0" fill="#3d2a17"/><circle cx="29.2" cy="37.2" r="1.0" fill="#3d2a17"/><circle cx="22.7" cy="34.8" r="1.6" fill="#8a6236"/></g><path d="M30 38 Q40 34 48 30 V48 H26 Z" fill="#1f150c" opacity="0.7"/><ellipse cx="23.3" cy="25.6" rx="14.6" ry="14.2" fill="#f2eee4"/><ellipse cx="31" cy="20" rx="6" ry="7" fill="#8a9ab8" opacity="0.5"/><path d="M9.5 20 Q22 15.5 32 19 Q36 22 37 30" stroke="#c2415a" stroke-width="1.1" fill="none" stroke-dasharray="1 0.6"/><path d="M10 33 Q16 39 27 38.5" stroke="#c2415a" stroke-width="1" fill="none" stroke-dasharray="1 0.6"/></g></svg>
<div class="t cell" style="left:700px;top:1397.03px"><span class="lat" style="letter-spacing:0px;">qin</span></div>
<div class="abs dash" style="left:961.1px;top:1411px"></div>
<div class="abs dash" style="left:971.2px;top:1411px"></div>
<div class="abs dash" style="left:1410.4px;top:1411px"></div>
<div class="abs dash" style="left:2055.6px;top:1411px"></div>
<div class="abs dash" style="left:2501.8px;top:1411px"></div>
<div class="t cell link" style="left:2747px;top:1397.03px">删除账号</div>
<div class="t cell link" style="left:2863.8px;top:1397.03px">修改账号</div>
<div class="t cell link" style="left:2980.6px;top:1397.03px">修改密码</div>
<div class="abs vsep" style="left:2849.6px;top:1401.03px"></div>
<div class="abs vsep" style="left:2966.9px;top:1401.03px"></div>
<div class="abs rowline" style="top:1559.87px"></div>
<svg class="abs" style="left:639px;top:1486.7px" width="48" height="48" viewBox="0 0 48 48"><defs><clipPath id="c10"><circle cx="24" cy="24" r="24"/></clipPath><filter id="f10" x="-20%" y="-20%" width="140%" height="140%"><feGaussianBlur stdDeviation="0.7"/></filter></defs><g clip-path="url(#c10)"><rect width="48" height="48" fill="#3f8ef0"/><circle cx="7.8" cy="22" r="5" fill="#f8c516"/><circle cx="40.2" cy="22" r="5" fill="#f8c516"/><path d="M24 5.7 Q25.5 9 28 10.5 Q40 13 40 26 Q40 38 24 40 Q8 38 8 26 Q8 13 20 10.5 Q22.5 9 24 5.7 Z" fill="#fbd932"/><path d="M14.5 40 Q24 35 33.5 40 L37 48 H11 Z" fill="#f7d22c"/><path d="M11 26 Q11 17 18 16.5 Q22 16.8 24 18.4 Q26 16.8 30 16.5 Q37 17 37 26 Q37 31 24 31 Q11 31 11 26 Z" fill="#fdf3f0"/><circle cx="17.7" cy="24.5" r="2.4" fill="#111"/><circle cx="31.3" cy="24.5" r="2.4" fill="#111"/><circle cx="17.2" cy="24" r="0.8" fill="#fff"/><circle cx="31.8" cy="24" r="0.8" fill="#fff"/><circle cx="24.5" cy="26.2" r="2.7" fill="#f04a36"/><path d="M11.5 30 Q24 27 36.5 30 Q37 37 24 37.5 Q11 37 11.5 30 Z" fill="#ec4a2a"/><path d="M14 32.5 Q24 35.5 34 32.5" stroke="#c93018" stroke-width="0.7" fill="none"/></g></svg>
<div class="t cell" style="left:700px;top:1497.20px"><span class="lat" style="letter-spacing:0px;">demo</span></div>
<div class="t cell num" style="left:960px;top:1497.20px"><span class="lat" style="letter-spacing:0.9px">155****1401</span></div>
<svg class="abs" style="left:1109px;top:1506.2px" width="22" height="11" viewBox="0 0 22 11"><path d="M1 1.2 Q11 9 21 1.2" stroke="#222" stroke-width="1.5" fill="none" stroke-linecap="round"/><path d="M3.2 3.6 L1.6 6 M7.2 5.6 L6.4 8.6 M14.8 5.6 L15.6 8.6 M18.8 3.6 L20.4 6" stroke="#222" stroke-width="1.5" stroke-linecap="round"/></svg>
<div class="abs dash" style="left:1410.4px;top:1511px"></div>
<div class="t cell ctr link" style="left:2059px;top:1497.20px"><span class="lat">3</span></div>
<div class="t cell ctr link" style="left:2505.5px;top:1497.20px"><span class="lat">1</span></div>
<div class="t cell link" style="left:2747px;top:1497.20px">删除账号</div>
<div class="t cell link" style="left:2863.8px;top:1497.20px">修改账号</div>
<div class="t cell link" style="left:2980.6px;top:1497.20px">修改密码</div>
<div class="abs vsep" style="left:2849.6px;top:1501.20px"></div>
<div class="abs vsep" style="left:2966.9px;top:1501.20px"></div>
<div class="abs rowline" style="top:1660.04px"></div>
<svg class="abs" style="left:639px;top:1586.87px" width="48" height="48" viewBox="0 0 48 48"><defs><clipPath id="c11"><circle cx="24" cy="24" r="24"/></clipPath><filter id="f11" x="-20%" y="-20%" width="140%" height="140%"><feGaussianBlur stdDeviation="0.7"/></filter><linearGradient id="g11" x1="0" y1="0" x2="0" y2="1"><stop offset="0" stop-color="#eebb9e"/><stop offset="0.22" stop-color="#f8c28e"/><stop offset="0.36" stop-color="#fbc36a"/><stop offset="0.44" stop-color="#fbb44e"/><stop offset="0.49" stop-color="#f77c48"/><stop offset="0.515" stop-color="#2a1018"/><stop offset="0.535" stop-color="#f25a3e"/><stop offset="0.6" stop-color="#f56a3e"/><stop offset="0.72" stop-color="#f99444"/><stop offset="0.85" stop-color="#f7a25e"/><stop offset="1" stop-color="#c48b78"/></linearGradient></defs><g clip-path="url(#c11)"><rect width="48" height="48" fill="url(#g11)"/><g filter="url(#f11)"><g fill="#4a1408" opacity="0.85"><ellipse cx="15" cy="22.3" rx="3.6" ry="2.6"/><ellipse cx="20" cy="20.6" rx="3.4" ry="3.6"/><ellipse cx="25.5" cy="20.4" rx="3.8" ry="3.8"/><ellipse cx="30.5" cy="21.2" rx="3.2" ry="3.2"/><ellipse cx="34.5" cy="22.6" rx="2.6" ry="2.2"/></g><g fill="#5a1a0c" opacity="0.55"><ellipse cx="15.5" cy="26.5" rx="3.2" ry="2.2"/><ellipse cx="20.5" cy="28" rx="3" ry="3.4"/><ellipse cx="25.5" cy="28.2" rx="3.2" ry="3.6"/><ellipse cx="30.5" cy="27.6" rx="2.8" ry="3"/><ellipse cx="34.5" cy="26.2" rx="2.2" ry="1.8"/></g><path d="M20.5 17 V32 M26 16.5 V33 M31 18.5 V31 M16 19.5 V29" stroke="#2a0a06" stroke-width="0.9" opacity="0.7"/></g><rect x="0" y="24.2" width="48" height="0.9" fill="#1c0810"/></g></svg>
<div class="t cell" style="left:700px;top:1597.37px"><span class="lat" style="letter-spacing:0px;">admin</span></div>
<div class="t cell num" style="left:960px;top:1597.37px"><span class="lat" style="letter-spacing:0.9px">155****1407</span></div>
<svg class="abs" style="left:1109px;top:1606.37px" width="22" height="11" viewBox="0 0 22 11"><path d="M1 1.2 Q11 9 21 1.2" stroke="#222" stroke-width="1.5" fill="none" stroke-linecap="round"/><path d="M3.2 3.6 L1.6 6 M7.2 5.6 L6.4 8.6 M14.8 5.6 L15.6 8.6 M18.8 3.6 L20.4 6" stroke="#222" stroke-width="1.5" stroke-linecap="round"/></svg>
<div class="t cell" style="left:1408px;top:1597.37px"><span class="lat" style="letter-spacing:0.46px;">163123@163.com</span></div>
<div class="t cell ctr link" style="left:2059px;top:1597.37px"><span class="lat">3</span></div>
<div class="t cell ctr link" style="left:2505.5px;top:1597.37px"><span class="lat">1</span></div>
<div class="t cell link" style="left:2747px;top:1597.37px">删除账号</div>
<div class="t cell link" style="left:2863.8px;top:1597.37px">修改账号</div>
<div class="t cell link" style="left:2980.6px;top:1597.37px">修改密码</div>
<div class="abs vsep" style="left:2849.6px;top:1601.37px"></div>
<div class="abs vsep" style="left:2966.9px;top:1601.37px"></div>
</body>
</html>
